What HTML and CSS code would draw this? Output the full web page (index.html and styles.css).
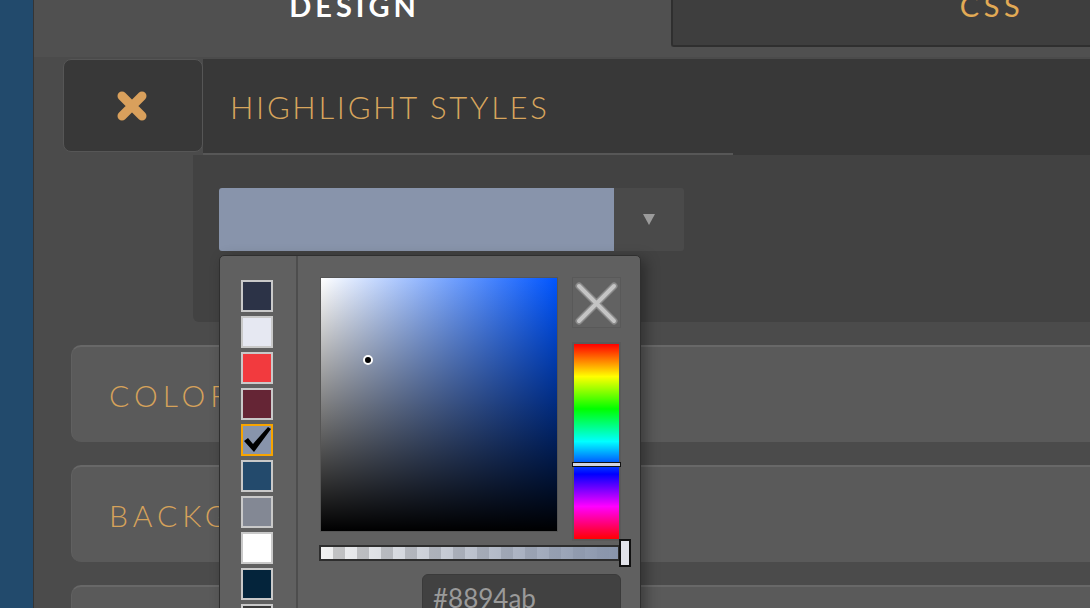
FILE: index.html
```html
<!DOCTYPE html>
<html lang="en">
<head>
<meta charset="utf-8">
<title>Highlight styles</title>
<link rel="stylesheet" href="styles.css">
</head>
<body>
<div class="app">
  <aside class="sidebar"></aside>
  <main class="main">
    <nav class="tabs">
      <div class="tab tab-active"><span class="tab-label">DESIGN</span></div>
      <div class="tab tab-css"><span class="tab-label">CSS</span></div>
    </nav>
    <div class="content">
      <section class="editor">
        <div class="editor-head">
          <button class="close-btn" type="button" aria-label="Close">
            <svg width="36" height="36" viewBox="0 0 36 36"><path d="M8 8 L28 28 M28 8 L8 28" stroke="#d9a05c" stroke-width="9" stroke-linecap="round" fill="none"/></svg>
          </button>
          <div class="editor-title">HIGHLIGHT STYLES</div>
        </div>
        <div class="editor-body">
          <div class="color-select">
            <div class="color-value" style="background:#8894ab"></div>
            <div class="color-arrow"><span class="triangle"></span></div>
            <div class="picker">
              <div class="swatches">
                <div class="swatch" style="background:#2c3347"></div>
                <div class="swatch" style="background:#e6e8f2"></div>
                <div class="swatch" style="background:#f23a3e"></div>
                <div class="swatch" style="background:#652535"></div>
                <div class="swatch selected" style="background:#8894ab">
                  <svg width="28" height="28" viewBox="0 0 28 28"><path d="M1 15 L5 12 L10 18 L25 1 L28 3 L11 26 Z" fill="#000"/></svg>
                </div>
                <div class="swatch" style="background:#234a6c"></div>
                <div class="swatch" style="background:#838894"></div>
                <div class="swatch" style="background:#ffffff"></div>
                <div class="swatch" style="background:#04243b"></div>
                <div class="swatch" style="background:#3a3a3a"></div>
              </div>
              <div class="picker-main">
                <div class="picker-top">
                  <div class="sv"><span class="sv-pointer"></span></div>
                  <div class="side">
                    <div class="clear-btn">
                      <svg width="47" height="49" viewBox="0 0 47 49"><path d="M6 8 L41 43 M41 8 L6 43" stroke="#8a8a8a" stroke-width="7" stroke-linecap="round" fill="none"/><path d="M6 8 L41 43 M41 8 L6 43" stroke="#c4c4c4" stroke-width="4" stroke-linecap="round" fill="none"/></svg>
                    </div>
                    <div class="hue"><span class="hue-marker"></span></div>
                  </div>
                </div>
                <div class="alpha"><span class="alpha-handle"></span></div>
                <div class="hex">#8894ab</div>
              </div>
            </div>
          </div>
        </div>
      </section>
      <div class="panel">COLORS</div>
      <div class="panel">BACKGROUND</div>
      <div class="panel">BORDERS</div>
    </div>
  </main>
</div>
</body>
</html>
```

FILE: styles.css
```css
html, body {
  margin: 0;
  padding: 0;
  background: #4b4b4b;
}

.app {
  display: flex;
  height: 608px;
  overflow: hidden;
  font-family: "Lato", "Open Sans", sans-serif;
}

.sidebar {
  width: 33px;
  flex-shrink: 0;
  background: #224a6c;
  border-right: 1px solid #353535;
}

.main {
  flex: 1;
  min-width: 0;
  overflow: hidden;
  display: flex;
  flex-direction: column;
}

.tabs {
  display: flex;
  align-items: flex-start;
  height: 57px;
  flex-shrink: 0;
  background: #505050;
}

.tab {
  height: 47px;
  box-sizing: border-box;
  flex-shrink: 0;
  text-align: center;
  overflow: hidden;
}

.tab-active {
  width: 637px;
}

.tab-css {
  width: 642px;
  padding-right: 6px;
  background: #3e3e3e;
  border-left: 2px solid #2f2f2f;
  border-bottom: 2px solid #2f2f2f;
  border-bottom-left-radius: 3px;
}

.tab-label {
  display: block;
  margin-top: -8px;
  line-height: 28px;
  font-size: 29px;
  letter-spacing: 4px;
  padding-left: 4px;
}

.tab-active .tab-label {
  color: #ffffff;
  font-weight: 700;
}

.tab-css .tab-label {
  color: #e2aa55;
  font-weight: 400;
  letter-spacing: 4.5px;
}

.content {
  padding: 2px 0 0 29px;
  display: flex;
  flex-direction: column;
}

.editor-head {
  display: flex;
  height: 96px;
}

.close-btn {
  width: 140px;
  height: 93px;
  flex-shrink: 0;
  box-sizing: border-box;
  margin: 0;
  padding: 0;
  background: #383838;
  border: 1px solid #565656;
  border-radius: 8px;
  display: grid;
  place-items: center;
  position: relative;
  z-index: 1;
}

.close-btn svg {
  display: block;
  margin-left: -3px;
}

.editor-title {
  flex: 1;
  height: 96px;
  box-sizing: border-box;
  padding-left: 27px;
  background: #383838 linear-gradient(#575757, #575757) left bottom / 530px 2px no-repeat;
  color: #d7a55d;
  font-size: 31px;
  font-weight: 300;
  letter-spacing: 2.7px;
  line-height: 96px;
  white-space: nowrap;
}

.editor-body {
  margin-left: 130px;
  height: 167px;
  box-sizing: border-box;
  padding: 33px 0 0 26px;
  background: #424242;
  border-bottom-left-radius: 6px;
}

.color-select {
  position: relative;
  display: flex;
  width: 465px;
  height: 63px;
}

.color-value {
  width: 395px;
  border-radius: 3px 0 0 3px;
}

.color-arrow {
  flex: 1;
  background: #4a4a4a;
  border-radius: 0 3px 3px 0;
  display: grid;
  place-items: center;
}

.triangle {
  width: 0;
  height: 0;
  border-left: 6px solid transparent;
  border-right: 6px solid transparent;
  border-top: 11px solid #9b9b9b;
}

.picker {
  position: absolute;
  top: 67px;
  left: 0;
  width: 422px;
  height: 380px;
  box-sizing: border-box;
  background: #606060;
  border: 1px solid #2f2f2f;
  border-radius: 5px 5px 0 0;
  box-shadow: 5px 4px 14px rgba(0, 0, 0, 0.35);
  display: flex;
  z-index: 5;
}

.swatches {
  width: 78px;
  flex-shrink: 0;
  box-sizing: border-box;
  border-right: 2px solid #4d4d4d;
  padding: 24px 0 0 21px;
  display: flex;
  flex-direction: column;
  gap: 4px;
}

.swatch {
  width: 32px;
  height: 32px;
  flex-shrink: 0;
  box-sizing: border-box;
  border: 2px solid #c9c9c9;
}

.swatch svg {
  display: block;
}

.swatch.selected {
  border-color: #f7a400;
}

.picker-main {
  padding: 21px 0 0 22px;
  display: flex;
  flex-direction: column;
}

.picker-top {
  display: flex;
  gap: 14px;
}

.sv {
  position: relative;
  width: 238px;
  height: 255px;
  box-sizing: border-box;
  border: 1px solid #555;
  background:
    linear-gradient(to top, #000 0%, rgba(0, 0, 0, 0) 100%),
    linear-gradient(to right, #ffffff 0%, hsl(220, 100%, 50%) 100%);
}

.sv-pointer {
  position: absolute;
  left: 42px;
  top: 77px;
  width: 6px;
  height: 6px;
  border-radius: 50%;
  background: #000;
  border: 2px solid #fff;
}

.side {
  width: 49px;
  display: flex;
  flex-direction: column;
  gap: 14px;
}

.clear-btn {
  height: 51px;
  box-sizing: border-box;
  border: 1px solid #595959;
  background: #626262;
}

.clear-btn svg {
  display: block;
}

.hue {
  position: relative;
  height: 199px;
  box-sizing: border-box;
  border: 2px solid #5a5a5a;
  background: linear-gradient(to bottom, #ff0000 0%, #ffff00 16.7%, #00ff00 33.3%, #00ffff 50%, #0000ff 66.7%, #ff00ff 83.3%, #ff0000 100%);
}

.hue-marker {
  position: absolute;
  left: -2px;
  right: -2px;
  top: 118px;
  height: 5px;
  box-sizing: border-box;
  border: 1px solid #111;
  background: #d0d4e0;
}

.alpha {
  position: relative;
  margin: 4px 0 0 -1px;
  width: 301px;
  height: 16px;
  box-sizing: border-box;
  border: 2px solid #2e2e2e;
  background:
    linear-gradient(to right, rgba(136, 148, 171, 0), #8894ab),
    repeating-conic-gradient(#c4c4c4 0 25%, #f2f2f2 0 50%) 0 0 / 24px 24px;
}

.alpha-handle {
  position: absolute;
  left: 298px;
  top: -8px;
  width: 12px;
  height: 28px;
  box-sizing: border-box;
  border: 2px solid #111;
  background: #e2e3ea;
}

.hex {
  margin: 13px 0 0 102px;
  width: 199px;
  height: 44px;
  box-sizing: border-box;
  padding-left: 10px;
  background: #414141;
  border: 1px solid #3a3a3a;
  border-radius: 6px;
  color: #9a9a9a;
  font-size: 26px;
  line-height: 46px;
}

.panel {
  margin: 23px 0 0 8px;
  height: 97px;
  flex-shrink: 0;
  box-sizing: border-box;
  padding-left: 37px;
  background: #5a5a5a;
  border-top: 2px solid #686868;
  border-left: 1px solid #606060;
  border-radius: 10px 0 0 10px;
  color: #d6a25a;
  font-size: 30px;
  font-weight: 300;
  letter-spacing: 5px;
  line-height: 96px;
  white-space: nowrap;
}
```
